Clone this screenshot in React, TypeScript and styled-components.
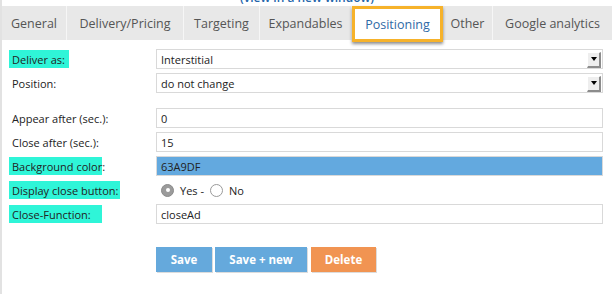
import React from "react";
import styled, { createGlobalStyle } from "styled-components";

const Global = createGlobalStyle`
  html, body { margin: 0; padding: 0; background: #fff; }
  body { font-family: "Open Sans", "Liberation Sans", sans-serif; color: #222; }
`;

const Page = styled.div`
  min-height: 294px;
  border-left: 2px solid #e2e2e2;
  box-sizing: border-box;
  width: 612px;
  overflow: hidden;
`;

const Header = styled.div`
  height: 6px;
  overflow: hidden;
  display: flex;
  align-items: flex-end;
  justify-content: center;
`;

const ViewLink = styled.a`
  font-size: 12px;
  line-height: 12px;
  margin-bottom: 2px;
  color: #2466ab;
  font-weight: 600;
  text-decoration: none;
`;

const TabBar = styled.div`
  height: 34px;
  background: #e8e8e8;
  display: flex;
  align-items: stretch;
`;

const Tab = styled.div<{ $w: number }>`
  width: ${(p) => p.$w}px;
  box-sizing: border-box;
  display: flex;
  align-items: center;
  justify-content: center;
  font-size: 12.5px;
  color: #555;
  border-right: 1px solid #f6f6f6;
  white-space: nowrap;
  &:last-child { border-right: none; }
`;

const ActiveTab = styled.div<{ $w: number }>`
  width: ${(p) => p.$w}px;
  height: 36px;
  box-sizing: border-box;
  border: 3px solid #f6b22a;
  background: #fff;
  box-shadow: 0 2px 3px rgba(0, 0, 0, 0.45);
  display: flex;
  align-items: center;
  justify-content: center;
  font-size: 12.5px;
  color: #2f6aa6;
  position: relative;
  z-index: 1;
`;

const Form = styled.div`
  padding: 9px 9px 0 7px;
  display: grid;
  grid-template-columns: 147px 447px;
  row-gap: 4px;
  align-items: center;
`;

const Label = styled.span<{ $hl?: boolean; $w?: number }>`
  display: inline-flex;
  align-items: center;
  height: 18px;
  padding-left: 3px;
  box-sizing: border-box;
  width: ${(p) => (p.$w ? `${p.$w}px` : "auto")};
  background: ${(p) => (p.$hl ? "#2ff5d8" : "transparent")};
  font-size: 11px;
  color: #222;
  white-space: nowrap;
  justify-self: start;
`;

const Spacer = styled.div`
  grid-column: 1 / span 2;
  height: 7px;
`;

const Field = styled.div<{ $bg?: string }>`
  height: 20px;
  box-sizing: border-box;
  border: 1px solid #d9d9d9;
  background: ${(p) => p.$bg || "#fff"};
  display: flex;
  align-items: center;
  padding-left: 4px;
  font-size: 11px;
  color: #222;
`;

const SelectField = styled(Field)`
  padding-right: 1px;
  justify-content: space-between;
`;

const DropBtn = styled.div`
  width: 14px;
  height: 16px;
  box-sizing: border-box;
  background: #eeeeee;
  border-top: 1px solid #fff;
  border-left: 1px solid #fff;
  border-right: 2px solid #8c8c8c;
  border-bottom: 2px solid #8c8c8c;
  display: flex;
  align-items: center;
  justify-content: center;
  margin-top: 1px;
`;

const Arrow = styled.div`
  width: 0;
  height: 0;
  border-left: 3px solid transparent;
  border-right: 3px solid transparent;
  border-top: 4px solid #000;
`;

const RadioRow = styled.div`
  display: flex;
  align-items: center;
  height: 20px;
  padding-left: 5px;
  font-size: 11px;
  color: #222;
`;

const Radio = styled.span<{ $on?: boolean }>`
  width: 13px;
  height: 13px;
  box-sizing: border-box;
  border-radius: 50%;
  border: 1px solid ${(p) => (p.$on ? "#8a8a8a" : "#9a9a9a")};
  background: ${(p) => (p.$on ? "#9b9b9b" : "#fff")};
  display: inline-flex;
  align-items: center;
  justify-content: center;
  margin-right: 6px;
  &::after {
    content: "";
    width: 4px;
    height: 4px;
    border-radius: 50%;
    background: ${(p) => (p.$on ? "#fff" : "transparent")};
  }
`;

const RadioText = styled.span`
  margin-right: 6px;
`;

const Buttons = styled.div`
  grid-column: 2;
  display: flex;
  gap: 3px;
  margin-top: 19px;
`;

const Btn = styled.button<{ $c: string; $w: number; $gap?: number }>`
  width: ${(p) => p.$w}px;
  height: 25px;
  border: none;
  margin-left: ${(p) => p.$gap || 0}px;
  background: ${(p) => p.$c};
  color: #fff;
  font-family: "Open Sans", "Liberation Sans", sans-serif;
  font-weight: 700;
  font-size: 11.5px;
  box-shadow: 1px 1px 0 #dcdcdc;
  padding: 0;
  cursor: pointer;
`;

export default function App() {
  return (
    <>
      <Global />
      <Page>
        <Header>
          <ViewLink href="#">(view in a new window)</ViewLink>
        </Header>
        <TabBar>
          <Tab $w={65}>General</Tab>
          <Tab $w={117}>Delivery/Pricing</Tab>
          <Tab $w={76}>Targeting</Tab>
          <Tab $w={92}>Expandables</Tab>
          <ActiveTab $w={91}>Positioning</ActiveTab>
          <Tab $w={50}>Other</Tab>
          <Tab $w={119}>Google analytics</Tab>
        </TabBar>
        <Form>
          <Label $hl $w={60}>Deliver as:</Label>
          <SelectField>
            Interstitial
            <DropBtn><Arrow /></DropBtn>
          </SelectField>

          <Label>Position:</Label>
          <SelectField>
            do not change
            <DropBtn><Arrow /></DropBtn>
          </SelectField>

          <Spacer />

          <Label>Appear after (sec.):</Label>
          <Field>0</Field>

          <Label>Close after (sec.):</Label>
          <Field>15</Field>

          <Label $hl $w={93}>Background color:</Label>
          <Field $bg="#63a9df">63A9DF</Field>

          <Label $hl $w={111}>Display close button:</Label>
          <RadioRow>
            <Radio $on />
            <RadioText>Yes -</RadioText>
            <Radio />
            <RadioText>No</RadioText>
          </RadioRow>

          <Label $hl $w={93}>Close-Function:</Label>
          <Field>closeAd</Field>

          <Buttons>
            <Btn $c="#65a9dc" $w={56}>Save</Btn>
            <Btn $c="#65a9dc" $w={92}>Save + new</Btn>
            <Btn $c="#f19452" $w={65} $gap={1}>Delete</Btn>
          </Buttons>
        </Form>
      </Page>
    </>
  );
}
